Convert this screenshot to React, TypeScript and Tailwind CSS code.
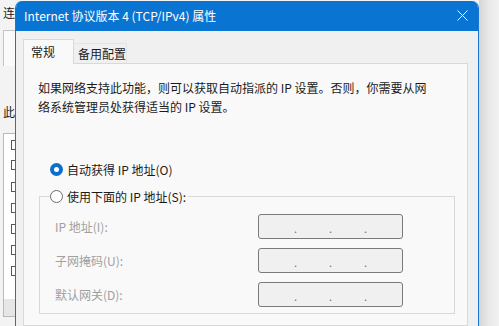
import React from 'react';

const font = "font-['Noto_Sans_CJK_SC','Microsoft_YaHei',sans-serif]";

const IpBox: React.FC = () => (
  <div className="w-[145px] h-[25px] border border-[#7a7a7a] rounded-[3px] bg-[#f0f0f0] flex items-center pl-[35px] pr-[35px] justify-between text-[#707070] text-[11px] leading-none">
    <span className="pt-[3px]">.</span>
    <span className="pt-[3px]">.</span>
    <span className="pt-[3px]">.</span>
  </div>
);

const Row: React.FC<{ label: string }> = ({ label }) => (
  <div className="flex items-center">
    <span className="w-[203px] text-[#a0a0a0]">{label}</span>
    <IpBox />
  </div>
);

const App: React.FC = () => {
  const checks = [143, 163, 185, 206, 227, 248, 269];

  return (
    <div className={`w-[499px] h-[326px] overflow-hidden flex bg-[#f3f3f3] text-[12px] ${font}`}>
      {/* fenêtre en arrière-plan */}
      <div className="w-[15px] shrink-0 overflow-hidden flex flex-col bg-[#f3f3f3]">
        <div className="h-[30px] pl-[3px] pt-[5px] leading-[16px] text-[#1b1b1b]">连</div>
        <div className="ml-[3px] h-[36px] border-l border-t border-[#c4c4c4] bg-[#fafafa]" />
        <div className="mt-[38px] pl-[3px] leading-[16px] text-[#1b1b1b]">此</div>
        <div className="ml-[3px] mt-[13px] h-[184px] border-l border-t border-b border-[#b8b8b8] bg-white flex flex-col">
          <div className="relative flex-1">
            {checks.map((y) => (
              <div
                key={y}
                className="absolute left-[7px] w-[10px] h-[10px] border border-[#555] bg-white"
                style={{ top: y - 137 }}
              />
            ))}
          </div>
          <div className="h-[17px] bg-[#e6e6e6]" />
        </div>
      </div>

      {/* boîte de dialogue */}
      <div className="w-[464px] shrink-0 mt-px flex flex-col border-l border-r border-[#1a74d2] rounded-t-[7px] overflow-hidden bg-[#f0f0f0]">
        <div className="h-[30px] shrink-0 bg-[#0a74d3] flex items-center justify-between pl-[8px] pr-[10px] text-white">
          <span className="leading-none text-white">Internet 协议版本 4 (TCP/IPv4) 属性</span>
          <svg width="11" height="11" viewBox="0 0 11 11" className="mb-[2px]">
            <path d="M0.5 0.5 L10.5 10.5 M10.5 0.5 L0.5 10.5" stroke="#ffffff" strokeWidth="1" />
          </svg>
        </div>

        <div className="pl-[7px] pr-[10px] pt-[8px] flex-1 flex flex-col">
          <div className="flex items-end">
            <div className="relative z-10 h-[25px] w-[51px] -mb-px border border-b-0 border-[#d9d9d9] bg-[#f9f9f9] pl-[7px] pt-[3px] text-[#1b1b1b]">
              常规
            </div>
            <div className="h-[20px] w-[53px] border-t border-r border-[#e3e3e3] bg-[#f0f0f0] pl-[4px] pt-[1px] text-[#1b1b1b]">
              备用配置
            </div>
          </div>

          <div className="flex-1 border border-[#d9d9d9] bg-[#f9f9f9] pl-[14px] pr-[10px] pt-[14px] flex flex-col text-[#1b1b1b]">
            <p className="leading-[19px]">
              如果网络支持此功能，则可以获取自动指派的 IP 设置。否则，你需要从网
              <br />
              络系统管理员处获得适当的 IP 设置。
            </p>

            <div className="mt-[44px] ml-[12px] flex items-center gap-[4px] leading-[19px]">
              <span className="w-[13px] h-[13px] rounded-full bg-[#0a6fce] flex items-center justify-center">
                <span className="w-[5px] h-[5px] rounded-full bg-white" />
              </span>
              <span>自动获得 IP 地址(O)</span>
            </div>

            <fieldset className="mt-[8px] ml-px w-[416px] border border-[#d8d8d8] pl-[10px] pr-[10px] pb-[6px]">
              <legend className="flex items-center gap-[4px] leading-[19px] pr-[2px] bg-[#f9f9f9]">
                <span className="w-[13px] h-[13px] rounded-full border border-[#6b6b6b] bg-white" />
                <span>使用下面的 IP 地址(S):</span>
              </legend>
              <div className="pl-[5px] pt-[8px] flex flex-col gap-[9px]">
                <Row label="IP 地址(I):" />
                <Row label="子网掩码(U):" />
                <Row label="默认网关(D):" />
              </div>
            </fieldset>
          </div>
        </div>
      </div>

      {/* ombre */}
      <div className="flex-1 bg-gradient-to-r from-[#d6d6d6] via-[#e9e9e9] to-[#f2f2f2]" />
    </div>
  );
};

export default App;
